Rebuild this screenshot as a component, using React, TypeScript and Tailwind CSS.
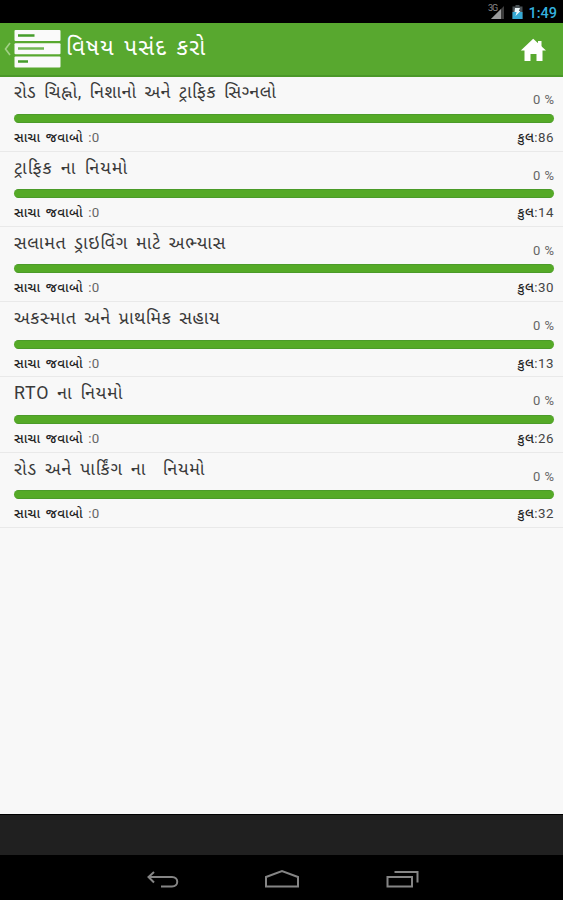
import React from 'react';

interface Topic {
  title: string;
  total: number;
  titleClass: string;
}

const topics: Topic[] = [
  { title: 'રોડ ચિહ્નો, નિશાનો અને ટ્રાફિક સિગ્\u200dનલો', total: 86, titleClass: 'tracking-[0.5px]' },
  { title: 'ટ્રાફિક ના નિયમો', total: 14, titleClass: 'tracking-[1px]' },
  { title: 'સલામત ડ્રાઇવિંગ માટે અભ્યાસ', total: 30, titleClass: 'tracking-[0.65px]' },
  { title: 'અકસ્માત અને પ્રાથમિક સહાય', total: 13, titleClass: 'tracking-[0.55px]' },
  { title: 'RTO ના નિયમો', total: 26, titleClass: 'tracking-[0.75px]' },
  { title: 'રોડ અને પાર્કિંગ ના  નિયમો', total: 32, titleClass: 'tracking-[0.8px]' },
];

const StatusBar = () => (
  <div className="flex h-[23px] shrink-0 items-center justify-end bg-black pr-[6px]">
    <svg className="h-[17px] w-[18px]" viewBox="0 0 18 17">
      <text x="1" y="8" fontSize="9" fill="#8a8a8a" fontFamily="Roboto" letterSpacing="-1">3G</text>
      <path d="M17 3V16H4Z" fill="#3d3d3d" />
      <path d="M14 6V16H4Z" fill="#9b9b9b" />
    </svg>
    <svg className="ml-[7px] h-[14px] w-[11px]" viewBox="0 0 11 14">
      <path d="M3.5 0H7.5V1.5H10.5V14H.5V1.5H3.5Z" fill="#4b5357" />
      <path d="M.5 7H10.5V14H.5Z" fill="#36a9d3" />
      <path d="M3 3H8L6.8 6H8.5L3.5 11L4.6 7H2.5Z" fill="#edf8fc" />
    </svg>
    <span className="ml-[5px] pt-[4px] text-[14.5px] leading-[19px] font-medium text-[#35b1df]">1:49</span>
  </div>
);

const Header = () => (
  <header className="flex h-[54px] shrink-0 items-center border-b-2 border-[#4b9829] bg-[#58a82f]">
    <svg className="ml-[4px] h-[14px] w-[7px]" viewBox="0 0 7 14">
      <path d="M6 1L1.5 7L6 13" fill="none" stroke="#a3d187" strokeWidth="1.6" />
    </svg>
    <svg className="ml-[3px] h-[38px] w-[47px]" viewBox="0 0 47 38">
      <rect x=".5" y="0" width="46" height="11" rx="1" fill="#fafafa" />
      <rect x=".5" y="13.2" width="46" height="11" rx="1" fill="#fafafa" />
      <rect x=".5" y="26.4" width="46" height="11" rx="1" fill="#fafafa" />
      <path d="M4 5.5H20.5M4 31.5H14" stroke="#459d2b" strokeWidth="2.5" />
      <path d="M4 18.5H30" stroke="#72b653" strokeWidth="2.5" />
    </svg>
    <h1 className="ml-[5px] whitespace-pre pb-[5px] text-[22.5px] leading-[24px] tracking-[1.1px] text-white [word-spacing:3px]">વિષય પસંદ કરો</h1>
    <svg className="mr-[16px] ml-auto mt-[2px] h-[24px] w-[27px]" viewBox="0 0 27 24">
      <path d="M13.2 .7L26 12.5H22.5V23H16.5V16H10.5V23H4.5V12.5H.8Z" fill="#fff" />
      <path d="M18 3H21.5V9H18Z" fill="#fff" />
    </svg>
  </header>
);

const TopicRow = ({ title, total, titleClass }: Topic) => (
  <li className="h-[75.25px] border-b border-[#e9e9e9] pr-[9px] pl-[14px]">
    <div className="flex h-[37.5px] justify-between">
      <span className={`whitespace-pre pt-[4px] text-[17.8px] leading-[24px] text-[#3a3a3a] [word-spacing:3px] ${titleClass}`}>{title}</span>
      <span className="pt-[15px] text-[13px] leading-[18px] text-[#666] [word-spacing:1px]">0 %</span>
    </div>
    <div className="h-[9px] rounded-full border-y border-[#4b9b29] bg-[#55aa27]" />
    <div className="flex justify-between pt-[6px] text-[13.3px] leading-[18px] text-[#222]">
      <span className="whitespace-pre tracking-[0.35px] [word-spacing:1.5px]">
        <span className="font-medium">સાચા જવાબો </span>
        <span className="text-[#666]">:0</span>
      </span>
      <span className="tracking-[0.5px]">
        <span className="font-medium">કુલ</span>
        <span className="text-[#444]">:{total}</span>
      </span>
    </div>
  </li>
);

const NavBar = () => (
  <nav className="flex h-[45px] shrink-0 items-center bg-black">
    <svg className="h-[45px] w-full" viewBox="0 0 563 45" fill="none" stroke="#858585" strokeWidth="2">
      <path d="M154 17L148.5 22L154 27.5M149 22H172C179 22 179 31.5 172 31.5H161" />
      <path d="M266 31.5V22L282 16L298 22V31.5Z" />
      <path d="M387.5 22H412V31.5H387.5ZM394.5 17H417.5V27.5" />
    </svg>
  </nav>
);

const App = () => {
  return (
    <div className="flex h-[900px] w-[563px] flex-col overflow-hidden bg-[#f8f8f8] font-[Roboto,'Noto_Sans_Gujarati','Noto_Sans',sans-serif]">
      <StatusBar />
      <Header />
      <ul className="-mt-[0.6px] flex-1">
        {topics.map((topic) => (
          <TopicRow key={topic.total} {...topic} />
        ))}
      </ul>
      {/* Ad space */}
      <div className="h-[41px] shrink-0 border-t border-black bg-[#202020]" />
      <NavBar />
    </div>
  );
};

export default App;
